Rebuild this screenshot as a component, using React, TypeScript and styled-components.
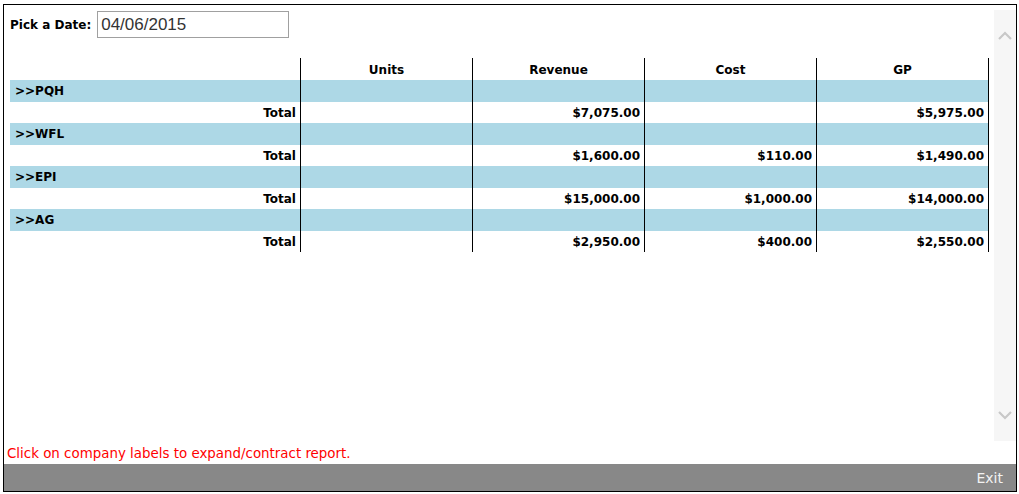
import React from "react";
import styled, { createGlobalStyle } from "styled-components";

const GlobalStyle = createGlobalStyle`
  html, body { margin: 0; padding: 0; background: #fff; }
  body { font-family: "DejaVu Sans", Verdana, sans-serif; }
`;

const Frame = styled.div`
  margin: 4px 2px 0 3px;
  height: 486px;
  border: 1px solid #000;
  display: flex;
  flex-direction: column;
  overflow: hidden;
`;

const Main = styled.div`
  flex: 1;
  display: flex;
  min-height: 0;
`;

const Content = styled.div`
  flex: 1;
  padding: 6px 0 0 6px;
`;

const DateRow = styled.div`
  display: flex;
  align-items: center;
  gap: 6px;
  height: 27px;
`;

const Label = styled.label`
  font-weight: bold;
  font-size: 12px;
  color: #000;
  padding-top: 1px;
`;

const DateInput = styled.input`
  box-sizing: border-box;
  width: 192px;
  height: 27px;
  border: 1px solid #a0a0a0;
  padding: 0 3px;
  font-family: "Liberation Sans", Arial, sans-serif;
  font-size: 17px;
  color: #333;
  outline: none;
`;

const Table = styled.div`
  margin-top: 20px;
  width: 979px;
  font-size: 12px;
  font-weight: bold;
  color: #000;
`;

const Row = styled.div<{ $band?: boolean; $head?: boolean }>`
  display: grid;
  grid-template-columns: 290px 172px 172px 172px 173px;
  height: ${(p) => (p.$head ? "22px" : "21.5px")};
  background: ${(p) => (p.$band ? "#add8e6" : "transparent")};
  padding-top: ${(p) => (p.$head ? "0" : "0")};
`;

const Cell = styled.div<{ $align?: "left" | "right" | "center"; $first?: boolean; $last?: boolean; $head?: boolean }>`
  box-sizing: border-box;
  display: flex;
  align-items: center;
  justify-content: ${(p) =>
    p.$align === "right" ? "flex-end" : p.$align === "center" ? "center" : "flex-start"};
  padding: ${(p) => (p.$align === "right" ? "0 4px 0 0" : p.$align === "left" ? "0 0 0 5px" : "0")};
  padding-top: ${(p) => (p.$head ? "2px" : "1px")};
  border-left: ${(p) => (p.$first ? "none" : "1px solid #000")};
  border-right: ${(p) => (p.$last ? "1px solid #000" : "none")};
  white-space: nowrap;
`;

const Scroll = styled.div`
  width: 22px;
  margin: 5px 0 0 0;
  height: 431px;
  background: #f6f6f6;
  display: flex;
  flex-direction: column;
  justify-content: space-between;
  align-items: center;
  padding: 21px 0 21px;
  box-sizing: border-box;
`;

const Note = styled.div`
  color: #ff0000;
  font-size: 13.4px;
  padding: 5px 0 0 3px;
  height: 23px;
  box-sizing: border-box;
  white-space: nowrap;
`;

const Bar = styled.div`
  height: 27px;
  background: #888;
  display: flex;
  align-items: center;
  justify-content: flex-end;
  padding-right: 13px;
`;

const Exit = styled.span`
  color: #f2f2f2;
  font-size: 14px;
  cursor: pointer;
`;

const Chevron = ({ up }: { up?: boolean }) => (
  <svg width="14" height="9" viewBox="0 0 14 9">
    <polyline
      points={up ? "1,8 7,2 13,8" : "1,1 7,7 13,1"}
      fill="none"
      stroke="#c8c8c8"
      strokeWidth="2.2"
    />
  </svg>
);

const data = [
  { name: "PQH", units: "", revenue: "$7,075.00", cost: "", gp: "$5,975.00" },
  { name: "WFL", units: "", revenue: "$1,600.00", cost: "$110.00", gp: "$1,490.00" },
  { name: "EPI", units: "", revenue: "$15,000.00", cost: "$1,000.00", gp: "$14,000.00" },
  { name: "AG", units: "", revenue: "$2,950.00", cost: "$400.00", gp: "$2,550.00" },
];

export default function App() {
  return (
    <>
      <GlobalStyle />
      <Frame>
        <Main>
          <Content>
            <DateRow>
              <Label>Pick a Date:</Label>
              <DateInput defaultValue="04/06/2015" />
            </DateRow>
            <Table>
              <Row $head>
                <Cell $first $head />
                <Cell $head $align="center">Units</Cell>
                <Cell $head $align="center">Revenue</Cell>
                <Cell $head $align="center">Cost</Cell>
                <Cell $head $align="center" $last>GP</Cell>
              </Row>
              {data.map((d) => (
                <React.Fragment key={d.name}>
                  <Row $band>
                    <Cell $first $align="left">&gt;&gt;{d.name}</Cell>
                    <Cell />
                    <Cell />
                    <Cell />
                    <Cell $last />
                  </Row>
                  <Row>
                    <Cell $first $align="right">Total</Cell>
                    <Cell $align="right">{d.units}</Cell>
                    <Cell $align="right">{d.revenue}</Cell>
                    <Cell $align="right">{d.cost}</Cell>
                    <Cell $align="right" $last>{d.gp}</Cell>
                  </Row>
                </React.Fragment>
              ))}
            </Table>
          </Content>
          <Scroll>
            <Chevron up />
            <Chevron />
          </Scroll>
        </Main>
        <Note>Click on company labels to expand/contract report.</Note>
        <Bar>
          <Exit>Exit</Exit>
        </Bar>
      </Frame>
    </>
  );
}
